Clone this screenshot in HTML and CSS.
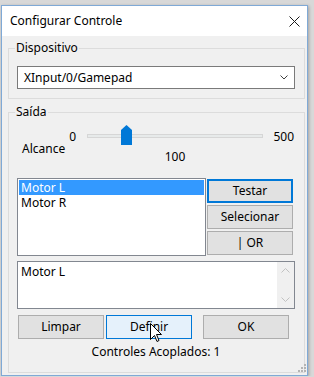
FILE: index.html
```html
<!DOCTYPE html>
<html lang="pt">
<head>
	<meta charset="utf-8">
	<title>Configurar Controle</title>
	<link rel="stylesheet" href="styles.css">
</head>
<body>
<div class="window">
	<div class="titlebar">
		<span class="title">Configurar Controle</span>
		<svg class="close" width="11" height="11" viewBox="0 0 11 11"><path d="M0.5 0.5L10.5 10.5M10.5 0.5L0.5 10.5" stroke="#1a1a1a" stroke-width="1" fill="none"/></svg>
	</div>
	<div class="client">
		<fieldset class="group device">
			<legend>Dispositivo</legend>
			<div class="combo">
				<span>XInput/0/Gamepad</span>
				<svg class="chevron" width="8" height="5" viewBox="0 0 8 5"><path d="M0.5 0.5L4 4L7.5 0.5" stroke="#404040" fill="none"/></svg>
			</div>
		</fieldset>
		<fieldset class="group output">
			<legend>Saída</legend>
			<div class="slider">
				<span class="min">0</span>
				<div class="track"><span class="thumb" style="left: 33px"></span></div>
				<span class="max">500</span>
				<span class="caption">Alcance</span>
				<span class="value">100</span>
			</div>
			<div class="motors">
				<ul class="listbox">
					<li class="selected">Motor L</li>
					<li>Motor R</li>
				</ul>
				<div class="side-buttons">
					<button class="btn default">Testar</button>
					<button class="btn">Selecionar</button>
					<button class="btn">| OR</button>
				</div>
			</div>
			<div class="memo">
				<div class="memo-text">Motor L</div>
				<div class="scrollbar">
					<svg width="9" height="5" viewBox="0 0 9 5"><path d="M0.5 4.5L4.5 0.5L8.5 4.5" stroke="#c2c2c2" fill="none"/></svg>
					<svg width="9" height="5" viewBox="0 0 9 5"><path d="M0.5 0.5L4.5 4.5L8.5 0.5" stroke="#c2c2c2" fill="none"/></svg>
				</div>
			</div>
			<div class="actions">
				<button class="btn">Limpar</button>
				<button class="btn hover">Definir</button>
				<button class="btn ok">OK</button>
				<svg class="cursor" width="12" height="20" viewBox="0 0 12 20"><path d="M0.5 0.5L0.5 16.5L4.5 12.5L7 18.5L9 17.5L6.5 11.5L11.5 11.5Z" fill="#fff" stroke="#000" stroke-width="1" stroke-linejoin="miter"/></svg>
			</div>
			<p class="status">Controles Acoplados: 1</p>
		</fieldset>
		<svg class="grip" width="12" height="12" viewBox="0 0 12 12">
			<rect x="9" y="1" width="2" height="2" fill="#b4b4b4"/>
			<rect x="6" y="4" width="2" height="2" fill="#b4b4b4"/>
			<rect x="9" y="4" width="2" height="2" fill="#b4b4b4"/>
			<rect x="3" y="7" width="2" height="2" fill="#b4b4b4"/>
			<rect x="6" y="7" width="2" height="2" fill="#b4b4b4"/>
			<rect x="9" y="7" width="2" height="2" fill="#b4b4b4"/>
		</svg>
	</div>
</div>
</body>
</html>
```

FILE: styles.css
```css
body {
	margin: 0;
	background: #d8d8d8;
	font-size: 12px;
	font-family: "Noto Sans", "Open Sans", sans-serif;
	color: #000;
}

.window {
	box-sizing: border-box;
	width: 307px;
	height: 371px;
	margin: 5px 0 0 1px;
	border: 1px solid #7fa9d6;
	display: flex;
	flex-direction: column;
	box-shadow: 1px 1px 3px rgba(0, 0, 0, 0.25);
}

.titlebar {
	height: 30px;
	background: #fff;
	display: flex;
	align-items: center;
	justify-content: space-between;
	padding: 0 7px 0 8px;
	line-height: 16px;
}

.client {
	flex: 1;
	background: #f0f0f0;
	position: relative;
	overflow: hidden;
}

.group {
	box-sizing: border-box;
	width: 297px;
	margin: 4px 0 0 6px;
	padding: 0 9px 0 8px;
	border: 1px solid #dcdcdc;
	min-inline-size: 0;
}

.group legend {
	padding: 0 1px;
	margin-left: -2px;
	line-height: 16px;
}

.device {
	padding-top: 10px;
	padding-bottom: 9px;
}

.combo {
	box-sizing: border-box;
	height: 23px;
	background: #fff;
	border: 1px solid #7a7a7a;
	display: flex;
	align-items: center;
	justify-content: space-between;
	padding: 0 6px 0 6px;
	line-height: 16px;
}

.output {
	margin-top: 5px;
	padding-bottom: 12px;
}

/* slider */
.slider {
	display: grid;
	grid-template-columns: 70px 176px 31px;
	grid-template-rows: 15px 24px;
	margin-top: 6px;
	line-height: 16px;
}

.slider .min {
	text-align: right;
	padding: 3px 11px 0 0;
}

.slider .max {
	text-align: right;
	padding-top: 3px;
}

.track {
	position: relative;
	height: 4px;
	margin-top: 8px;
	background: #e7eaea;
	border: 1px solid #d6d6d6;
	box-sizing: border-box;
}

.thumb {
	position: absolute;
	top: -10px;
	width: 11px;
	height: 20px;
	background: #0078d7;
	clip-path: polygon(0 5px, 5.5px 0, 11px 5px, 11px 100%, 0 100%);
}

.slider .caption {
	padding-left: 5px;
}

.slider .value {
	text-align: center;
	padding-top: 8px;
}

/* list and side buttons */
.motors {
	display: flex;
	gap: 1px;
	margin-top: 13px;
}

.listbox {
	box-sizing: border-box;
	width: 189px;
	height: 78px;
	margin: 0;
	padding: 1px;
	list-style: none;
	background: #fff;
	border: 1px solid #828790;
}

.listbox li {
	height: 15px;
	line-height: 15px;
	padding-left: 2px;
}

.listbox .selected {
	background: #3399ff;
	color: #fff;
}

.side-buttons {
	display: flex;
	flex-direction: column;
	gap: 2px;
	margin-top: 1px;
}

.btn {
	box-sizing: border-box;
	width: 86px;
	height: 24px;
	padding: 0;
	background: #e1e1e1;
	border: 1px solid #adadad;
	font: inherit;
	color: #000;
	line-height: 16px;
}

.btn.default {
	border-color: #0078d7;
	box-shadow: inset 0 0 0 1px #0078d7;
}

.btn.hover {
	background: #e5f1fb;
	border-color: #0078d7;
}

/* memo */
.memo {
	box-sizing: border-box;
	height: 48px;
	margin-top: 5px;
	display: flex;
	background: #fff;
	border: 1px solid #828790;
}

.memo-text {
	flex: 1;
	padding: 2px 3px;
	line-height: 16px;
}

.scrollbar {
	width: 17px;
	background: #f0f0f0;
	display: flex;
	flex-direction: column;
	justify-content: space-between;
	align-items: center;
	padding: 6px 0;
	box-sizing: border-box;
}

/* bottom row */
.actions {
	position: relative;
	display: flex;
	margin-top: 6px;
	padding-left: 1px;
	gap: 2px;
}

.actions .ok {
	margin-left: 9px;
}

.cursor {
	position: absolute;
	left: 133px;
	top: 8px;
}

.status {
	margin: 5px 0 0;
	text-align: center;
	line-height: 16px;
}

.grip {
	position: absolute;
	right: 0;
	bottom: 0;
}
```
